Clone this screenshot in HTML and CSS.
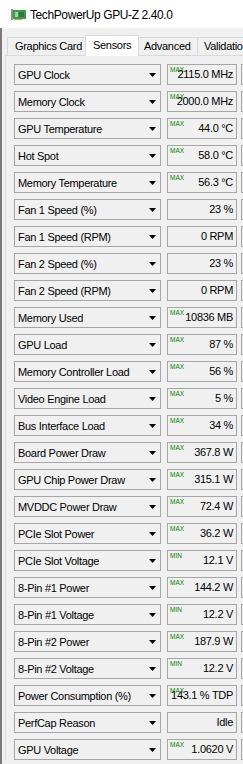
FILE: index.html
```html
<!DOCTYPE html>
<html lang="en">
<head>
  <meta charset="UTF-8">
  <meta name="viewport" content="width=device-width, initial-scale=1.0">
  <title>TechPowerUp GPU-Z 2.40.0</title>
  <link rel="stylesheet" href="styles.css">
</head>
<body>
  <div class="titlebar">
    <svg class="app-icon" width="15" height="11" viewBox="0 0 15 11">
      <rect x="0" y="0" width="2" height="11" fill="#8c8c8c"/>
      <rect x="2" y="1" width="13" height="9" fill="#3d9a4e"/>
      <rect x="4" y="3" width="3" height="5" fill="#9bd6a4"/>
      <rect x="8" y="3" width="5" height="5" fill="#2b7a3b"/>
      <rect x="3" y="10" width="8" height="1" fill="#c9a640"/>
    </svg>
    <span class="title">TechPowerUp GPU-Z 2.40.0</span>
  </div>

  <div class="window">
    <div class="tabs">
      <div class="tab tab-card">Graphics Card</div>
      <div class="tab tab-sensors active">Sensors</div>
      <div class="tab tab-advanced">Advanced</div>
      <div class="tab tab-validation">Validation</div>
    </div>

    <div class="panel">
      <div class="row"><div class="combo">GPU Clock<span class="arrow"></span></div><div class="value"><span class="tag">MAX</span>2115.0 MHz</div><div class="graph"></div></div>
      <div class="row"><div class="combo">Memory Clock<span class="arrow"></span></div><div class="value"><span class="tag">MAX</span>2000.0 MHz</div><div class="graph"></div></div>
      <div class="row"><div class="combo">GPU Temperature<span class="arrow"></span></div><div class="value"><span class="tag">MAX</span>44.0 °C</div><div class="graph"></div></div>
      <div class="row"><div class="combo">Hot Spot<span class="arrow"></span></div><div class="value"><span class="tag">MAX</span>58.0 °C</div><div class="graph"></div></div>
      <div class="row"><div class="combo">Memory Temperature<span class="arrow"></span></div><div class="value"><span class="tag">MAX</span>56.3 °C</div><div class="graph"></div></div>
      <div class="row"><div class="combo">Fan 1 Speed (%)<span class="arrow"></span></div><div class="value">23 %</div><div class="graph"></div></div>
      <div class="row"><div class="combo">Fan 1 Speed (RPM)<span class="arrow"></span></div><div class="value">0 RPM</div><div class="graph"></div></div>
      <div class="row"><div class="combo">Fan 2 Speed (%)<span class="arrow"></span></div><div class="value">23 %</div><div class="graph"></div></div>
      <div class="row"><div class="combo">Fan 2 Speed (RPM)<span class="arrow"></span></div><div class="value">0 RPM</div><div class="graph"></div></div>
      <div class="row"><div class="combo">Memory Used<span class="arrow"></span></div><div class="value"><span class="tag">MAX</span>10836 MB</div><div class="graph"></div></div>
      <div class="row"><div class="combo">GPU Load<span class="arrow"></span></div><div class="value"><span class="tag">MAX</span>87 %</div><div class="graph"></div></div>
      <div class="row"><div class="combo">Memory Controller Load<span class="arrow"></span></div><div class="value"><span class="tag">MAX</span>56 %</div><div class="graph"></div></div>
      <div class="row"><div class="combo">Video Engine Load<span class="arrow"></span></div><div class="value"><span class="tag">MAX</span>5 %</div><div class="graph"></div></div>
      <div class="row"><div class="combo">Bus Interface Load<span class="arrow"></span></div><div class="value"><span class="tag">MAX</span>34 %</div><div class="graph"></div></div>
      <div class="row"><div class="combo">Board Power Draw<span class="arrow"></span></div><div class="value"><span class="tag">MAX</span>367.8 W</div><div class="graph"></div></div>
      <div class="row"><div class="combo">GPU Chip Power Draw<span class="arrow"></span></div><div class="value"><span class="tag">MAX</span>315.1 W</div><div class="graph"></div></div>
      <div class="row"><div class="combo">MVDDC Power Draw<span class="arrow"></span></div><div class="value"><span class="tag">MAX</span>72.4 W</div><div class="graph"></div></div>
      <div class="row"><div class="combo">PCIe Slot Power<span class="arrow"></span></div><div class="value"><span class="tag">MAX</span>36.2 W</div><div class="graph"></div></div>
      <div class="row"><div class="combo">PCIe Slot Voltage<span class="arrow"></span></div><div class="value"><span class="tag">MIN</span>12.1 V</div><div class="graph"></div></div>
      <div class="row"><div class="combo">8-Pin #1 Power<span class="arrow"></span></div><div class="value"><span class="tag">MAX</span>144.2 W</div><div class="graph"></div></div>
      <div class="row"><div class="combo">8-Pin #1 Voltage<span class="arrow"></span></div><div class="value"><span class="tag">MIN</span>12.2 V</div><div class="graph"></div></div>
      <div class="row"><div class="combo">8-Pin #2 Power<span class="arrow"></span></div><div class="value"><span class="tag">MAX</span>187.9 W</div><div class="graph"></div></div>
      <div class="row"><div class="combo">8-Pin #2 Voltage<span class="arrow"></span></div><div class="value"><span class="tag">MIN</span>12.2 V</div><div class="graph"></div></div>
      <div class="row"><div class="combo">Power Consumption (%)<span class="arrow"></span></div><div class="value"><span class="tag">MAX</span>143.1 % TDP</div><div class="graph"></div></div>
      <div class="row"><div class="combo">PerfCap Reason<span class="arrow"></span></div><div class="value">Idle</div><div class="graph"></div></div>
      <div class="row"><div class="combo">GPU Voltage<span class="arrow"></span></div><div class="value"><span class="tag">MAX</span>1.0620 V</div><div class="graph"></div></div>
    </div>
  </div>
</body>
</html>
```

FILE: styles.css
```css
html, body {
  margin: 0;
  padding: 0;
}
body {
  width: 243px;
  height: 764px;
  overflow: hidden;
  background: #f0f0f0;
  font-family: "Liberation Sans", Arial, sans-serif;
  color: #000;
}

/* title bar */
.titlebar {
  height: 28px;
  background: #fff;
  display: flex;
  align-items: center;
  padding-left: 11px;
  box-sizing: border-box;
}
.app-icon {
  margin-right: 4px;
}
.title {
  font-size: 12px;
  letter-spacing: -0.4px;
  margin-top: 1px;
}

/* window body */
.window {
  height: 736px;
  border-left: 2px solid #7d7976;
  padding-left: 3px;
  padding-top: 7px;
  box-sizing: border-box;
}

.tabs {
  display: flex;
  align-items: flex-end;
  height: 20px;
  margin-left: 2px;
  font-size: 11px;
  letter-spacing: -0.3px;
}
.tab {
  flex: none;
  height: 18px;
  box-sizing: border-box;
  border: 1px solid #d9d9d9;
  border-bottom: none;
  background: #f0f0f0;
  padding: 2px 0 0 7px;
  white-space: nowrap;
  overflow: hidden;
  margin-left: -1px;
}
.tab:first-child { margin-left: 0; }
.tab.active {
  height: 21px;
  background: #fff;
  margin-bottom: -1px;
  position: relative;
  z-index: 1;
  padding-top: 3px;
}
.tab-card { width: 79px; }
.tab-sensors { width: 54px; }
.tab-advanced { width: 60px; padding-left: 5px; }
.tab-validation { width: 60px; padding-left: 6px; }

.panel {
  border-top: 1px solid #d9d9d9;
  border-left: 1px solid #d9d9d9;
  background: #f0f0f0;
  padding: 8px 0 0 8px;
  display: flex;
  flex-direction: column;
  gap: 6px;
}

/* sensor rows */
.row {
  display: flex;
  height: 21px;
  font-size: 11px;
  letter-spacing: -0.3px;
}
.combo, .value, .graph {
  flex: none;
  box-sizing: border-box;
  height: 21px;
  border: 1px solid #a6a6a6;
  background: #f0f0f0;
  line-height: 18px;
  white-space: nowrap;
}
.combo {
  width: 147px;
  padding: 0 4px 0 3px;
  display: flex;
  justify-content: space-between;
  align-items: center;
}
.arrow {
  width: 7px;
  height: 4px;
  background: #000;
  clip-path: polygon(0 0, 100% 0, 50% 100%);
  margin-top: 1px;
}
.value {
  width: 70px;
  margin-left: 6px;
  text-align: right;
  padding-right: 3px;
  position: relative;
}
.tag {
  position: absolute;
  left: 2px;
  top: 1px;
  font-size: 6.5px;
  line-height: 8px;
  letter-spacing: 0;
  color: #008000;
}
.graph {
  width: 40px;
  margin-left: 4px;
}
```
